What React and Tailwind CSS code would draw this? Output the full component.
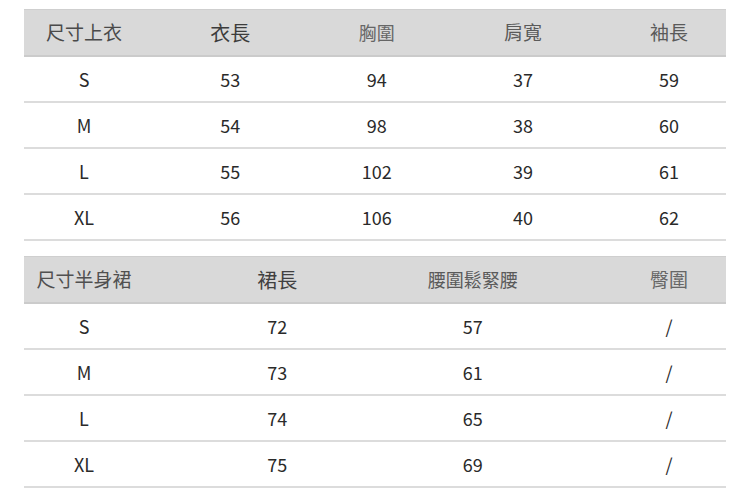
import React from "react";

const font = { fontFamily: '"Noto Sans CJK TC", "Noto Sans", sans-serif' };

const top = [
  ["S", "53", "94", "37", "59"],
  ["M", "54", "98", "38", "60"],
  ["L", "55", "102", "39", "61"],
  ["XL", "56", "106", "40", "62"],
];
const bottom = [
  ["S", "72", "57", "/"],
  ["M", "73", "61", "/"],
  ["L", "74", "65", "/"],
  ["XL", "75", "69", "/"],
];

export default function App() {
  return (
    <div
      className="w-[750px] h-[501px] bg-white pt-[9px] pl-[24px] overflow-hidden"
      style={font}
    >
      <div className="w-[702px]">
        <div className="grid grid-cols-[133px_146.5px_146.5px_146px_130px] h-[48px] items-center bg-[#d9d9d9] border-t border-[#cfcfcf] border-b-2 border-b-[#cbcbcb]">
          <div className="text-center pr-[13px] text-[19px] text-[#4a4a4a]">尺寸上衣</div>
          <div className="text-center text-[20px] text-[#3c3c3c]">衣長</div>
          <div className="text-center text-[18px] text-[#666]">胸圍</div>
          <div className="text-center text-[19px] text-[#5a5a5a]">肩寬</div>
          <div className="text-center pl-[16px] text-[19px] text-[#5a5a5a]">袖長</div>
        </div>
        {top.map((r) => (
          <div
            key={r[0]}
            className="grid grid-cols-[133px_146.5px_146.5px_146px_130px] h-[46px] items-center border-b-2 border-[#dcdcdc] text-[18px] text-[#2a2a2a]"
          >
            <div className="text-center pr-[13px]">{r[0]}</div>
            <div className="text-center">{r[1]}</div>
            <div className="text-center">{r[2]}</div>
            <div className="text-center">{r[3]}</div>
            <div className="text-center pl-[16px]">{r[4]}</div>
          </div>
        ))}
        <div className="h-[15px]" />
        <div className="grid grid-cols-[156px_194.5px_196.5px_155px] h-[48px] items-center bg-[#d9d9d9] border-t border-[#cfcfcf] border-b-2 border-b-[#cbcbcb]">
          <div className="text-center pr-[36px] text-[19px] text-[#505050]">尺寸半身裙</div>
          <div className="text-center text-[20px] text-[#404040]">裙長</div>
          <div className="text-center text-[18px] text-[#5a5a5a]">腰圍鬆緊腰</div>
          <div className="text-center pl-[41px] text-[19px] text-[#666]">臀圍</div>
        </div>
        {bottom.map((r) => (
          <div
            key={r[0]}
            className="grid grid-cols-[156px_194.5px_196.5px_155px] h-[46px] items-center border-b-2 border-[#dcdcdc] text-[18px] text-[#2a2a2a]"
          >
            <div className="text-center pr-[36px]">{r[0]}</div>
            <div className="text-center">{r[1]}</div>
            <div className="text-center">{r[2]}</div>
            <div className="text-center pl-[41px]">{r[3]}</div>
          </div>
        ))}
      </div>
    </div>
  );
}
